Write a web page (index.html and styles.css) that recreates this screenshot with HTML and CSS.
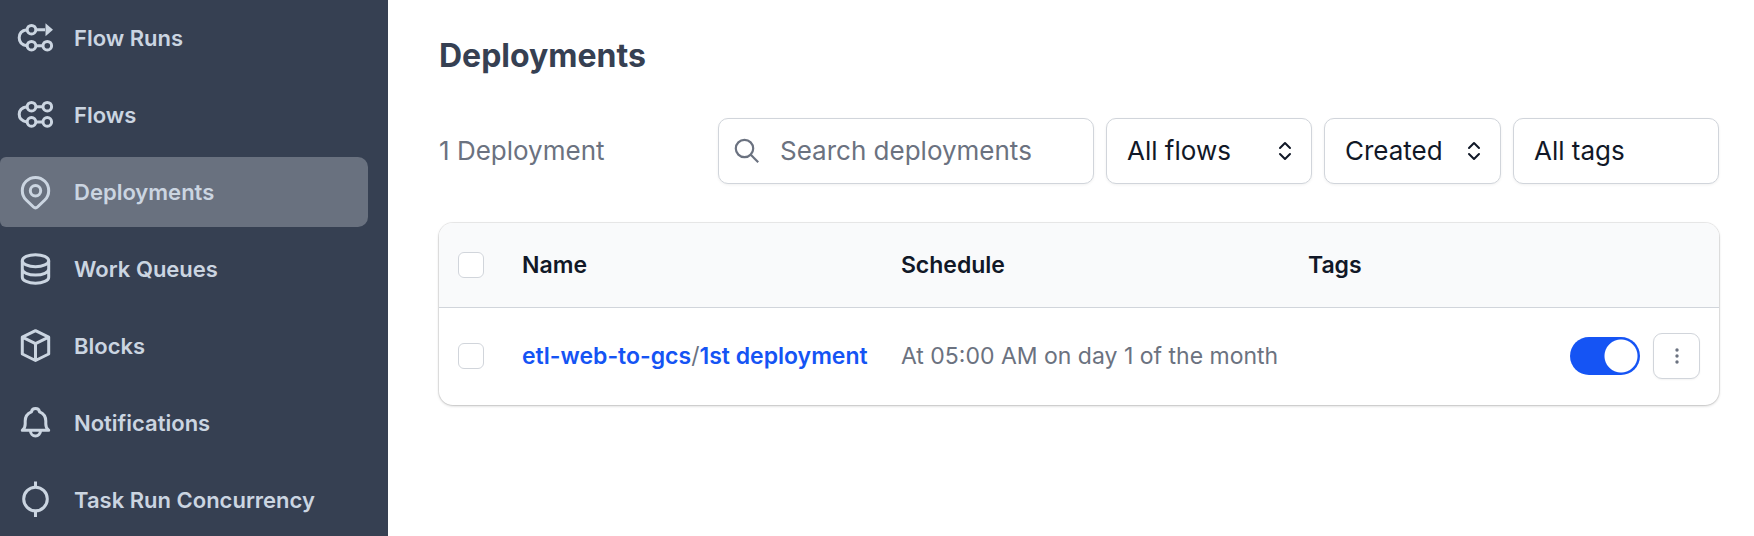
FILE: index.html
```html
<!DOCTYPE html>
<html lang="en">
<head>
<meta charset="utf-8">
<title>Deployments</title>
<link rel="stylesheet" href="styles.css">
</head>
<body>
<div class="app">
  <nav class="sidebar" aria-label="Main">
    <a class="nav-item" href="#">
      <svg class="nav-icon" viewBox="0 0 36 36" aria-hidden="true">
        <path d="M10 9.700C4.500 10.500 2.200 13.500 2.200 17.700S4.500 24.900 10 25.700M19 9.700h9M19 25.700h6"/>
        <circle cx="14.500" cy="9.700" r="4.300"/><circle cx="14.500" cy="25.700" r="4.300"/><circle cx="30.300" cy="25.700" r="4.300"/>
        <path class="solid" d="M28.500 3.200v13L36 9.700z"/>
      </svg>
      <span>Flow Runs</span>
    </a>
    <a class="nav-item" href="#">
      <svg class="nav-icon" viewBox="0 0 36 36" aria-hidden="true">
        <path d="M10 9.700C4.500 10.500 2.200 13.200 2.200 17.300S4.500 24.100 10 24.900M19 9.700h6M19 24.900h6"/>
        <circle cx="14.500" cy="9.700" r="4.300"/><circle cx="14.500" cy="24.900" r="4.300"/><circle cx="30.300" cy="9.700" r="4.300"/><circle cx="30.300" cy="24.900" r="4.300"/>
      </svg>
      <span>Flows</span>
    </a>
    <a class="nav-item active" href="#" aria-current="page">
      <svg class="nav-icon" viewBox="0 0 36 36" aria-hidden="true">
        <path d="M27.800 26l-7.300 7a2.900 2.900 0 0 1-4 0L9.200 26a13.200 13.200 0 1 1 18.600 0z"/>
        <circle cx="18.500" cy="16.700" r="5.200"/>
      </svg>
      <span>Deployments</span>
    </a>
    <a class="nav-item" href="#">
      <svg class="nav-icon" viewBox="0 0 36 36" aria-hidden="true">
        <ellipse cx="18.500" cy="9.700" rx="13.200" ry="6"/>
        <path d="M5.300 9.700v16.500c0 3.400 5.900 6 13.200 6s13.200-2.600 13.200-6V9.700M5.300 18c0 3.400 5.900 6 13.200 6s13.200-2.600 13.200-6"/>
      </svg>
      <span>Work Queues</span>
    </a>
    <a class="nav-item" href="#">
      <svg class="nav-icon" viewBox="0 0 36 36" aria-hidden="true">
        <path d="M18.500 2.700L31.700 9.200V26l-13.200 6.500L5.300 26V9.200zM5.300 9.200l13.200 6.500 13.200-6.500M18.500 15.700v16.800"/>
      </svg>
      <span>Blocks</span>
    </a>
    <a class="nav-item" href="#">
      <svg class="nav-icon" viewBox="0 0 36 36" aria-hidden="true">
        <path d="M5.300 25.300h26.400c-2.200-1.500-2.900-3.500-2.900-6.300v-3c0-4.500-2.300-7.600-6.200-9.200a4.200 4.200 0 0 0-8.200 0c-3.900 1.600-6.200 4.700-6.200 9.200v3c0 2.800-.7 4.800-2.900 6.300zM13.500 26a5 5 0 0 0 10 0"/>
      </svg>
      <span>Notifications</span>
    </a>
    <a class="nav-item" href="#">
      <svg class="nav-icon" viewBox="0 0 36 36" aria-hidden="true">
        <circle cx="18.500" cy="17" r="11.800"/>
        <path d="M18.500-.5v6M18.500 28.800V35"/>
      </svg>
      <span>Task Run Concurrency</span>
    </a>
  </nav>

  <main class="main">
    <h1 class="title">Deployments</h1>

    <div class="toolbar">
      <span class="count">1 Deployment</span>
      <label class="control search">
        <svg class="search-icon" viewBox="0 0 26 26" aria-hidden="true"><circle cx="10.500" cy="10.500" r="8.700"/><path d="M16.800 16.800l7.400 7.400"/></svg>
        <input class="search-input" type="search" placeholder="Search deployments" aria-label="Search deployments">
      </label>
      <div class="control select flows">
        <select aria-label="Flow"><option>All flows</option></select>
        <svg class="chevrons" viewBox="0 0 14 20" aria-hidden="true"><path d="M2 7l5-5 5 5M2 13l5 5 5-5"/></svg>
      </div>
      <div class="control select sort">
        <select aria-label="Sort by"><option>Created</option></select>
        <svg class="chevrons" viewBox="0 0 14 20" aria-hidden="true"><path d="M2 7l5-5 5 5M2 13l5 5 5-5"/></svg>
      </div>
      <button class="control tags" type="button">All tags</button>
    </div>

    <div class="card">
      <table class="table">
        <colgroup><col class="col-check"><col class="col-name"><col class="col-schedule"><col class="col-tags"><col class="col-actions"></colgroup>
        <thead>
          <tr>
            <th><input class="check" type="checkbox" aria-label="Select all deployments"></th>
            <th scope="col">Name</th>
            <th scope="col">Schedule</th>
            <th scope="col">Tags</th>
            <th></th>
          </tr>
        </thead>
        <tbody>
          <tr>
            <td><input class="check" type="checkbox" aria-label="Select 1st deployment"></td>
            <td class="name"><a href="#">etl-web-to-gcs</a>/<a href="#">1st deployment</a></td>
            <td>At 05:00 AM on day 1 of the month</td>
            <td></td>
            <td>
              <div class="actions">
                <input class="toggle" type="checkbox" role="switch" aria-label="Schedule active" checked>
                <button class="menu" type="button" aria-label="More actions">
                  <svg viewBox="0 0 4 16" aria-hidden="true"><circle cx="2" cy="2" r="1.700"/><circle cx="2" cy="8" r="1.700"/><circle cx="2" cy="14" r="1.700"/></svg>
                </button>
              </div>
            </td>
          </tr>
        </tbody>
      </table>
    </div>
  </main>
</div>
</body>
</html>
```

FILE: styles.css
```css
* { box-sizing: border-box; }

body {
  margin: 0;
  background: #fff;
  color: #6b7280;
  font-family: Inter, "Liberation Sans", sans-serif;
  font-size: 23px;
  line-height: 32px;
}

a { text-decoration: none; }
button, input, select { font: inherit; }

.app { display: flex; min-height: 100vh; }

.sidebar {
  display: flex;
  flex-direction: column;
  flex: none;
  gap: 7px;
  width: 388px;
  padding: 3px 20px 1px 0;
  background: #364052;
  font-size: 22px;
}

.nav-item {
  display: flex;
  align-items: center;
  gap: 21px;
  height: 70px;
  padding-left: 17px;
  border-radius: 6px 10px 10px 6px;
  color: #cbd5e1;
  font-weight: 600;
}
.nav-item.active { background: #69717f; }

.nav-icon {
  flex: none;
  width: 36px;
  height: 36px;
  overflow: visible;
  fill: none;
  stroke: currentColor;
  stroke-width: 3;
  stroke-linejoin: round;
}
.nav-icon .solid { fill: currentColor; stroke: none; }

.main { flex: 1; min-width: 0; padding: 36px 35px 36px 51px; }

.title {
  margin: 0;
  color: #364052;
  font-size: 32px;
  font-weight: 700;
  line-height: 40px;
}

.toolbar {
  display: flex;
  align-items: center;
  gap: 12px;
  margin-top: 42px;
  font-size: 26px;
}
.count { flex: 1; white-space: nowrap; }

.control {
  height: 66px;
  border: 1px solid #d1d5db;
  border-radius: 10px;
  background: #fff;
  box-shadow: 0 1px 3px rgba(0, 0, 0, 0.06);
  color: #111827;
}

.search {
  display: flex;
  align-items: center;
  gap: 20px;
  flex: 0 1 376px;
  min-width: 0;
  padding: 0 16px 0 15px;
}
.search-icon {
  flex: none;
  width: 26px;
  height: 26px;
  fill: none;
  stroke: #6b7280;
  stroke-width: 2.2;
}
.search-input {
  flex: 1;
  min-width: 0;
  padding: 0;
  border: 0;
  outline: 0;
  background: transparent;
  color: #111827;
}
.search-input::placeholder { color: #6b7280; opacity: 1; }

.select { display: grid; align-items: center; }
.select select {
  grid-area: 1 / 1;
  width: 100%;
  height: 100%;
  padding: 0 44px 0 20px;
  border: 0;
  outline: 0;
  appearance: none;
  background: transparent;
  color: inherit;
}
.chevrons {
  grid-area: 1 / 1;
  justify-self: end;
  width: 14px;
  height: 20px;
  margin-right: 19px;
  pointer-events: none;
  fill: none;
  stroke: #111827;
  stroke-width: 2;
  stroke-linecap: round;
  stroke-linejoin: round;
}
.flows, .tags { flex: 0 0 206px; }
.sort { flex: 0 0 177px; }
.tags { padding: 0 20px; text-align: left; }

.card {
  margin-top: 39px;
  overflow: hidden;
  border-radius: 14px;
  box-shadow: 0 0 0 1px rgba(0, 0, 0, 0.07), 0 1px 3px rgba(0, 0, 0, 0.2);
}

.table {
  width: 100%;
  border-collapse: collapse;
  table-layout: fixed;
}
.col-check { width: 66px; }
.col-name { width: 29.6%; }
.col-schedule { width: 31.8%; }
.col-actions { width: 168px; }

.table th, .table td {
  padding: 0 17px;
  text-align: left;
  vertical-align: middle;
  white-space: nowrap;
}
.table th {
  height: 84px;
  border-bottom: 1px solid #d1d5db;
  background: #f9fafb;
  color: #111827;
  font-weight: 600;
}
.table td { height: 98px; }
.table .check, .table .toggle { display: block; margin: 0; appearance: none; }
.table th:first-child, .table td:first-child { padding-left: 19px; }
.table td:last-child { padding-right: 19px; }

.check {
  width: 26px;
  height: 26px;
  border: 1px solid #d1d5db;
  border-radius: 6px;
  background: #fff;
}

.name a { color: #1554f4; font-weight: 600; }

.actions {
  display: flex;
  align-items: center;
  justify-content: flex-end;
  gap: 13px;
}
.toggle {
  flex: none;
  width: 70px;
  height: 38px;
  border-radius: 19px;
  background: radial-gradient(circle at 51px 50%, #fff 16px, #1554f4 17px);
}
.menu {
  display: grid;
  place-items: center;
  width: 47px;
  height: 46px;
  padding: 0;
  border: 1px solid #d1d5db;
  border-radius: 9px;
  background: #fff;
  box-shadow: 0 1px 2px rgba(0, 0, 0, 0.05);
}
.menu svg { width: 4px; height: 16px; fill: #6b7280; }
```
